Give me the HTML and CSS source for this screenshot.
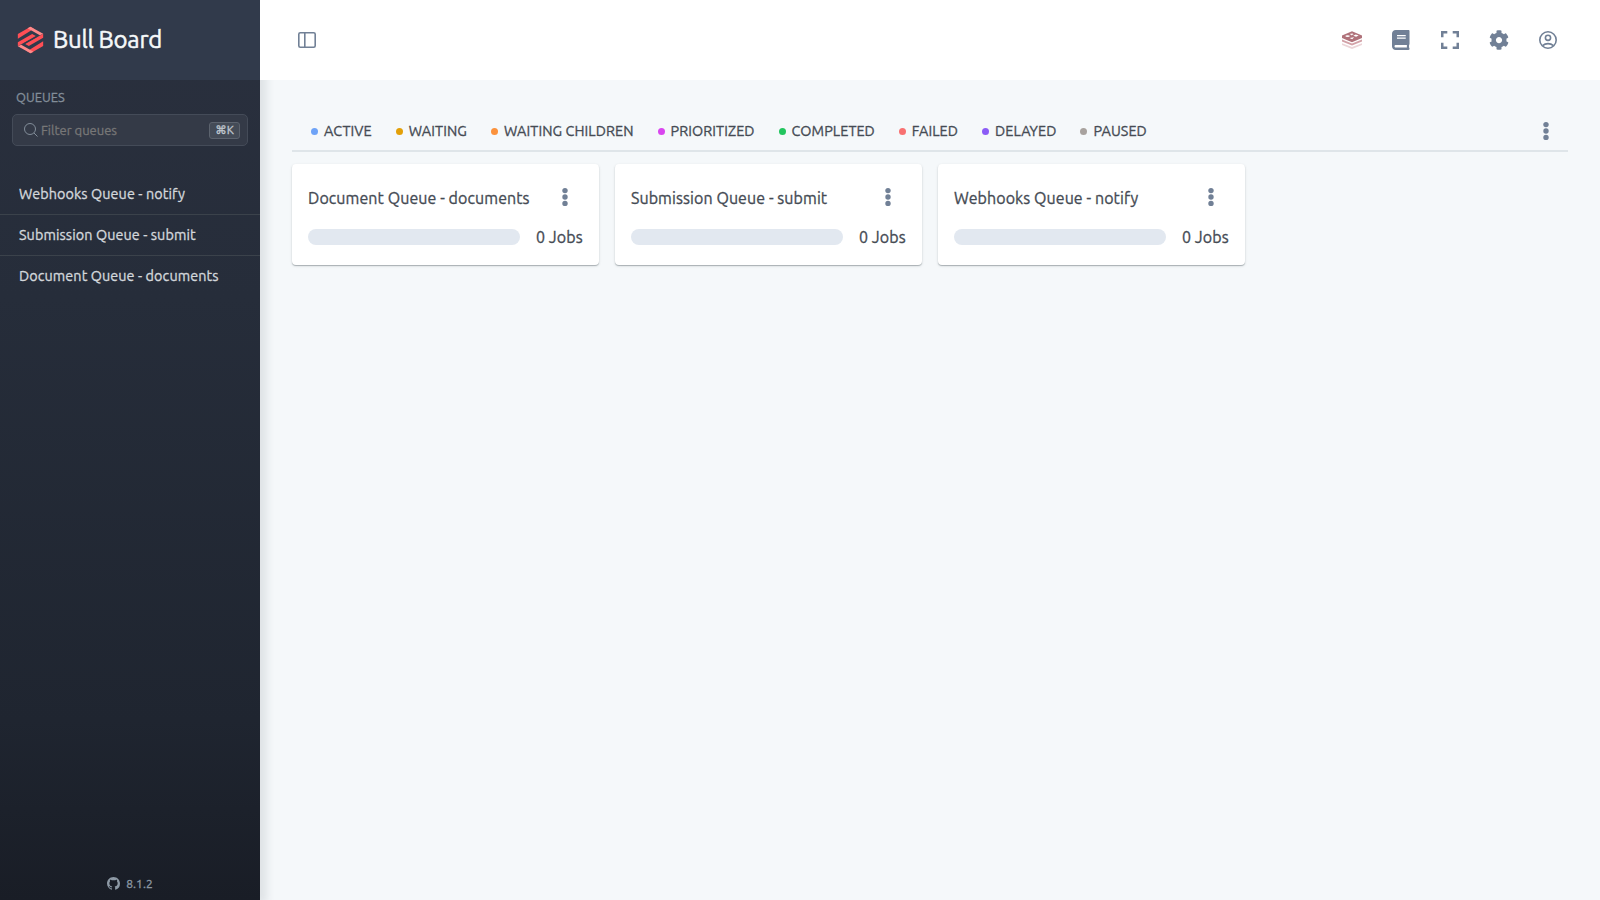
FILE: index.html
```html
<!DOCTYPE html>
<html lang="en">
<head>
    <meta charset="UTF-8">
    <meta name="viewport" content="width=device-width, initial-scale=1.0">
    <link rel="stylesheet" href="styles.css">
    <title>Bull Board</title>
</head>
<body>
    <aside class="sidebar">
        <a class="logo" href="#">
            <svg viewBox="20 18 80 84" width="27" height="28">
                <path fill="#ff4e55" d="M22 42 60 20 70 26 22 56zM98 41V53L55 78 44 72zM98 78 60 100 50 94 98 64zM22 79V67L65 42 76 48z"/>
                <path fill="#ff8a8a" d="M60 20 98 41 88 46 51 25zM60 100 22 79 32 74 69 95z"/>
                <path stroke="#313a4b" stroke-width="2.5" d="M40 71 80 49"/>
            </svg>
            <span>Bull Board</span>
        </a>
        <div class="filter">
            <h2>Queues</h2>
            <label class="search">
                <svg viewBox="0 0 14 14" width="14" height="14" fill="none" stroke="currentColor">
                    <circle cx="6" cy="6" r="5.5"/>
                    <path d="M10 10l3.5 3.5"/>
                </svg>
                <input type="text" placeholder="Filter queues">
                <kbd>⌘K</kbd>
            </label>
        </div>
        <ul class="menu">
            <li><a href="#">Webhooks Queue - notify</a></li>
            <li><a href="#">Submission Queue - submit</a></li>
            <li><a href="#">Document Queue - documents</a></li>
        </ul>
        <a class="version" href="#">
            <svg viewBox="0 0 16 16" width="13" height="13" fill="currentColor">
                <path d="M8 0C3.58 0 0 3.58 0 8c0 3.54 2.29 6.53 5.47 7.59.4.07.55-.17.55-.38 0-.19-.01-.82-.01-1.49-2.01.37-2.53-.49-2.69-.94-.09-.23-.48-.94-.82-1.13-.28-.15-.68-.52-.01-.53.63-.01 1.08.58 1.23.82.72 1.21 1.87.87 2.33.66.07-.52.28-.87.51-1.07-1.78-.2-3.64-.89-3.64-3.95 0-.87.31-1.59.82-2.15-.08-.2-.36-1.02.08-2.12 0 0 .67-.21 2.2.82a7.6 7.6 0 0 1 4 0c1.53-1.04 2.2-.82 2.2-.82.44 1.1.16 1.92.08 2.12.51.56.82 1.27.82 2.15 0 3.07-1.87 3.75-3.65 3.95.29.25.54.73.54 1.48 0 1.07-.01 1.93-.01 2.2 0 .21.15.46.55.38A8.01 8.01 0 0 0 16 8c0-4.42-3.58-8-8-8z"/>
            </svg>
            <span>8.1.2</span>
        </a>
    </aside>

    <header class="header">
        <button class="toggle" aria-label="Toggle sidebar">
            <svg viewBox="0 0 18 16" width="18" height="16" fill="none" stroke="currentColor" stroke-width="1.6">
                <rect x=".8" y=".8" width="16.4" height="14.4" rx="1.5"/>
                <path d="M6.8 1v14"/>
            </svg>
        </button>
        <nav class="actions">
            <button aria-label="Redis details">
                <svg viewBox="0 0 20 18" width="20" height="18">
                    <path fill="#ecd5d8" d="M0 12.2 10 16 20 12.2V14L10 18 0 14z"/>
                    <path fill="#d3a2a8" d="M0 8.6 10 12.4 20 8.6V10.6L10 14.6 0 10.6z"/>
                    <path fill="#b0727a" d="M0 4.6 10 .2 20 4.6V7L10 11.2 0 7z"/>
                    <path fill="#fff" d="M8.4 2.2l1.2.5 1.2-.5-.3.8 1.4.4-1.6.4-.5.8-.6-.8-1.5-.3 1.2-.5zM10.2 8.2 7.6 6.9l4.5-.6zM13.7 3.4l3 1.2-2.6 1.2-2.8-1.1z"/>
                    <ellipse fill="#fff" cx="5.6" cy="5.1" rx="2.2" ry=".9"/>
                </svg>
            </button>
            <button aria-label="Documentation">
                <svg viewBox="0 0 448 512" width="17.5" height="20" fill="currentColor">
                    <path d="M448 360V24c0-13.3-10.7-24-24-24H96C43 0 0 43 0 96v320c0 53 43 96 96 96h328c13.3 0 24-10.7 24-24v-16c0-7.5-3.5-14.3-8.9-18.7-4.2-15.4-4.2-59.3 0-74.7 5.4-4.3 8.9-11.1 8.9-18.6zM128 134c0-3.3 2.7-6 6-6h212c3.3 0 6 2.7 6 6v20c0 3.3-2.7 6-6 6H134c-3.3 0-6-2.7-6-6v-20zm0 64c0-3.3 2.7-6 6-6h212c3.3 0 6 2.7 6 6v20c0 3.3-2.7 6-6 6H134c-3.3 0-6-2.7-6-6v-20zm253.4 250H96c-17.7 0-32-14.3-32-32 0-17.6 14.4-32 32-32h285.4c-1.9 17.1-1.9 46.9 0 64z"/>
                </svg>
            </button>
            <button aria-label="Fullscreen">
                <svg viewBox="0 0 18 18" width="18" height="18" fill="none" stroke="currentColor" stroke-width="2.5">
                    <path d="M1.25 6.3V1.25H6.3M11.7 1.25h5.05V6.3M16.75 11.7v5.05H11.7M6.3 16.75H1.25V11.7"/>
                </svg>
            </button>
            <button aria-label="Settings">
                <svg viewBox="0 0 512 512" width="20" height="20" fill="currentColor">
                    <path d="M487.4 315.7l-42.6-24.6c4.3-23.2 4.3-47 0-70.2l42.6-24.6c4.9-2.8 7.1-8.6 5.5-14-11.1-35.6-30-67.8-54.7-94.6-3.8-4.1-10-5.1-14.8-2.3L380.8 110c-17.9-15.4-38.5-27.3-60.8-35.1V25.8c0-5.6-3.9-10.5-9.4-11.7-36.7-8.2-74.3-7.8-109.2 0-5.5 1.2-9.4 6.1-9.4 11.7V75c-22.2 7.9-42.8 19.8-60.8 35.1L88.7 85.5c-4.9-2.8-11-1.9-14.8 2.3-24.7 26.7-43.6 58.9-54.7 94.6-1.7 5.4.6 11.2 5.5 14L67.3 221c-4.3 23.2-4.3 47 0 70.2l-42.6 24.6c-4.9 2.8-7.1 8.6-5.5 14 11.1 35.6 30 67.8 54.7 94.6 3.8 4.1 10 5.1 14.8 2.3l42.6-24.6c17.9 15.4 38.5 27.3 60.8 35.1v49.2c0 5.6 3.9 10.5 9.4 11.7 36.7 8.2 74.3 7.8 109.2 0 5.5-1.2 9.4-6.1 9.4-11.7v-49.2c22.2-7.9 42.8-19.8 60.8-35.1l42.6 24.6c4.9 2.8 11 1.9 14.8-2.3 24.7-26.7 43.6-58.9 54.7-94.6 1.5-5.5-.7-11.3-5.6-14.1zM256 336c-44.1 0-80-35.9-80-80s35.9-80 80-80 80 35.9 80 80-35.9 80-80 80z"/>
                </svg>
            </button>
            <button aria-label="User">
                <svg viewBox="0 0 18 18" width="18" height="18" fill="none" stroke="currentColor" stroke-width="1.6">
                    <circle cx="9" cy="9" r="8.2"/>
                    <circle cx="9" cy="6.8" r="2.6"/>
                    <path d="M3.6 14.6c3-2.6 7.8-2.6 10.8 0"/>
                </svg>
            </button>
        </nav>
    </header>

    <main>
        <div class="overview">
            <ul class="legend">
                <li class="active">Active</li>
                <li class="waiting">Waiting</li>
                <li class="waiting-children">Waiting Children</li>
                <li class="prioritized">Prioritized</li>
                <li class="completed">Completed</li>
                <li class="failed">Failed</li>
                <li class="delayed">Delayed</li>
                <li class="paused">Paused</li>
            </ul>
            <button class="dots" aria-label="Actions">
                <svg viewBox="0 0 6 20" width="6" height="20" fill="currentColor"><circle cx="3" cy="3.6" r="2.7"/><circle cx="3" cy="10" r="2.7"/><circle cx="3" cy="16.4" r="2.7"/></svg>
            </button>
        </div>
        <section class="cards">
            <div class="card">
                <div class="card-title">
                    <a href="#">Document Queue - documents</a>
                    <button class="dots" aria-label="Actions">
                        <svg viewBox="0 0 6 20" width="6" height="20" fill="currentColor"><circle cx="3" cy="3.6" r="2.7"/><circle cx="3" cy="10" r="2.7"/><circle cx="3" cy="16.4" r="2.7"/></svg>
                    </button>
                </div>
                <div class="jobs"><div class="bar"></div><span>0 Jobs</span></div>
            </div>
            <div class="card">
                <div class="card-title">
                    <a href="#">Submission Queue - submit</a>
                    <button class="dots" aria-label="Actions">
                        <svg viewBox="0 0 6 20" width="6" height="20" fill="currentColor"><circle cx="3" cy="3.6" r="2.7"/><circle cx="3" cy="10" r="2.7"/><circle cx="3" cy="16.4" r="2.7"/></svg>
                    </button>
                </div>
                <div class="jobs"><div class="bar"></div><span>0 Jobs</span></div>
            </div>
            <div class="card">
                <div class="card-title">
                    <a href="#">Webhooks Queue - notify</a>
                    <button class="dots" aria-label="Actions">
                        <svg viewBox="0 0 6 20" width="6" height="20" fill="currentColor"><circle cx="3" cy="3.6" r="2.7"/><circle cx="3" cy="10" r="2.7"/><circle cx="3" cy="16.4" r="2.7"/></svg>
                    </button>
                </div>
                <div class="jobs"><div class="bar"></div><span>0 Jobs</span></div>
            </div>
        </section>
    </main>
</body>
</html>
```
FILE: styles.css
```css
* {
    box-sizing: border-box;
}

body {
    margin: 0;
    height: 100vh;
    display: grid;
    grid-template-columns: 260px 1fr;
    grid-template-rows: 80px 1fr;
    font-family: Ubuntu, "Noto Sans", sans-serif;
    font-size: 16px;
    letter-spacing: 0.08px;
    -webkit-text-stroke: 0.3px;
    color: #454b54;
    background-color: #f5f8fa;
    overflow: hidden;
}

a {
    color: inherit;
    text-decoration: none;
}

ul {
    list-style: none;
    margin: 0;
    padding: 0;
}

button {
    display: flex;
    align-items: center;
    justify-content: center;
    padding: 0;
    border: none;
    background: none;
    color: #718096;
}

svg {
    display: block;
    flex-shrink: 0;
}

/* Sidebar */
.sidebar {
    grid-row: 1 / 3;
    display: flex;
    flex-direction: column;
    background: linear-gradient(to bottom, #2a303e, #262d3a 33%, #1f2530 80%, #191d26);
    box-shadow: 4px 0 8px 3px rgba(38, 50, 56, 0.1);
}

.logo {
    height: 80px;
    display: flex;
    align-items: center;
    gap: 9px;
    padding: 0 0 2px 17px;
    background-color: #313a4b;
    color: #f5f8fa;
    font-size: 24px;
    letter-spacing: -0.28px;
    -webkit-text-stroke: 0.5px;
}

.logo svg {
    margin-top: 2px;
}

.filter {
    padding: 0 12px;
}

.filter h2 {
    margin: 7px 4px 7px;
    font-size: 12.8px;
    line-height: 20px;
    font-weight: 400;
    text-transform: uppercase;
    color: #828d99;
}

.search {
    display: flex;
    align-items: center;
    height: 32px;
    padding: 0 7px 0 11px;
    border: 1px solid #444b58;
    border-radius: 5px;
    background-color: #343a47;
    color: #828d99;
}

.search input {
    flex: 1;
    min-width: 0;
    padding: 0 0 0 3px;
    border: none;
    background: none;
    font: inherit;
    font-size: 13px;
}

.search input::placeholder {
    color: #777;
}

kbd {
    width: 31px;
    height: 17px;
    border: 1px solid #5c636e;
    border-radius: 3px;
    background-color: #444b57;
    color: #c0c8d0;
    font-family: Ubuntu, "DejaVu Sans", sans-serif;
    font-size: 11.5px;
    line-height: 14px;
    text-align: center;
}

.menu {
    flex: 1;
    margin-top: 28px;
    font-size: 14.4px;
    color: #d3d7db;
}

.menu li {
    height: 41px;
    padding-left: 19px;
    line-height: 40px;
    border-bottom: 1px solid #3b424b;
}

.menu li:last-child {
    border-bottom: none;
}

.version {
    display: flex;
    align-items: center;
    justify-content: center;
    gap: 6px;
    height: 33px;
    color: #8d99a5;
    font-size: 12px;
}

/* Header */
.header {
    position: relative;
    display: flex;
    align-items: center;
    justify-content: space-between;
    padding: 0 36px 0 32px;
    background-color: #fff;
}

.toggle {
    width: 30px;
    height: 30px;
}

.actions {
    display: flex;
    gap: 17px;
}

.actions button {
    width: 32px;
    height: 32px;
}

/* Overview */
main {
    padding: 32px 32px 0;
}

.overview {
    display: flex;
    justify-content: space-between;
    height: 40px;
    padding: 0 19px;
    border-bottom: 2px solid #dfe5e9;
}

.overview .dots {
    height: 38px;
}

.legend {
    display: flex;
    gap: 24px;
    font-size: 14.4px;
    line-height: 38px;
    text-transform: uppercase;
    white-space: nowrap;
}

.legend li {
    display: flex;
    align-items: center;
}

.legend li::before {
    content: "";
    width: 7px;
    height: 7px;
    margin-right: 6px;
    border-radius: 50%;
    background-color: currentColor;
}

.legend .active::before { background-color: #6ea3f7; }
.legend .waiting::before { background-color: #e3a008; }
.legend .waiting-children::before { background-color: #fb923c; }
.legend .prioritized::before { background-color: #d946ef; }
.legend .completed::before { background-color: #22c55e; }
.legend .failed::before { background-color: #f87171; }
.legend .delayed::before { background-color: #8b5cf6; }
.legend .paused::before { background-color: #a8a29e; }

.cards {
    display: grid;
    grid-template-columns: repeat(4, 1fr);
    gap: 16px;
    margin-top: 12px;
}

.card {
    height: 101px;
    padding: 16px;
    border-radius: 4px;
    background-color: #fff;
    box-shadow: 0 1px 1px rgba(38, 50, 56, 0.3), 0 1px 3px rgba(38, 50, 56, 0.12);
}

.card-title {
    display: flex;
    align-items: center;
    justify-content: space-between;
    height: 34px;
    padding-right: 15px;
    white-space: nowrap;
}

.card-title a {
    padding-top: 2px;
}

.jobs {
    display: flex;
    align-items: center;
    gap: 16px;
    margin-top: 12px;
    height: 22px;
}

.bar {
    flex: 1;
    height: 16px;
    border-radius: 8px;
    background-color: #e2e8f0;
}

.jobs span {
    width: 47px;
    white-space: nowrap;
}
```
